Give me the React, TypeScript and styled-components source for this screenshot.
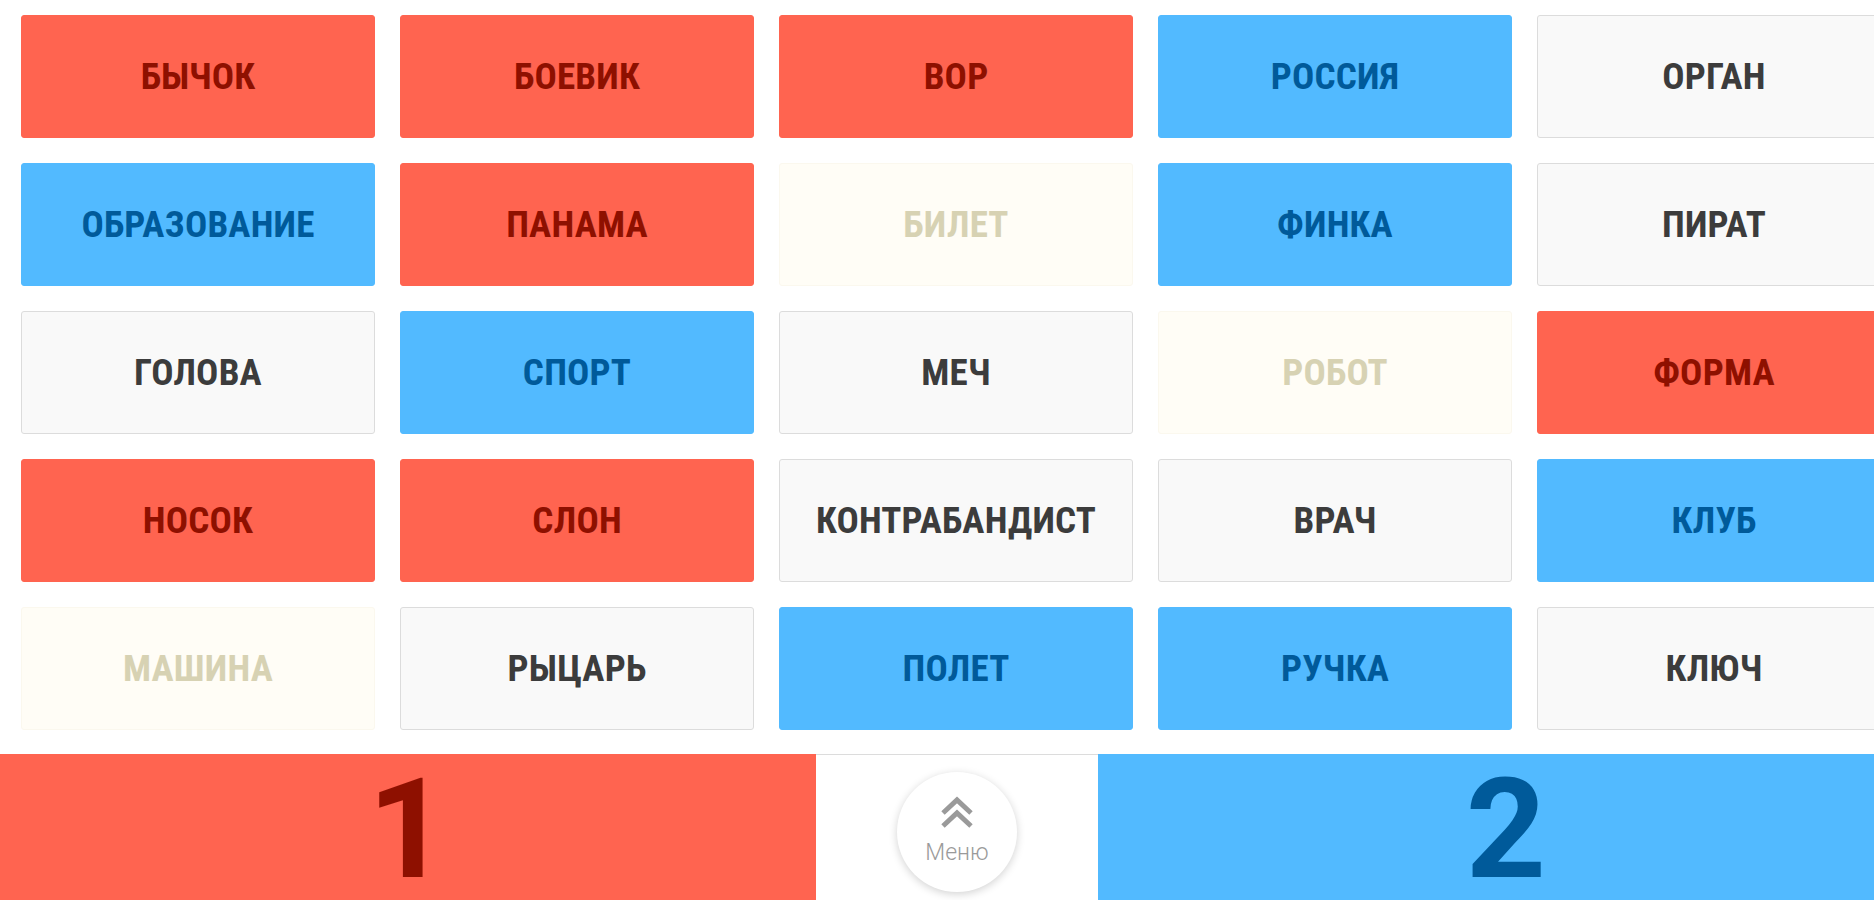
import React from "react";
import styled, { createGlobalStyle } from "styled-components";

type Team = "red" | "blue" | "neutral" | "killer";

const RED = "red";
const BLUE = "blue";
const NEUTRAL = "neutral";
const KILLER = "killer";

const words: [string, Team][] = [
  ["БЫЧОК", RED],
  ["БОЕВИК", RED],
  ["ВОР", RED],
  ["РОССИЯ", BLUE],
  ["ОРГАН", NEUTRAL],
  ["ОБРАЗОВАНИЕ", BLUE],
  ["ПАНАМА", RED],
  ["БИЛЕТ", KILLER],
  ["ФИНКА", BLUE],
  ["ПИРАТ", NEUTRAL],
  ["ГОЛОВА", NEUTRAL],
  ["СПОРТ", BLUE],
  ["МЕЧ", NEUTRAL],
  ["РОБОТ", KILLER],
  ["ФОРМА", RED],
  ["НОСОК", RED],
  ["СЛОН", RED],
  ["КОНТРАБАНДИСТ", NEUTRAL],
  ["ВРАЧ", NEUTRAL],
  ["КЛУБ", BLUE],
  ["МАШИНА", KILLER],
  ["РЫЦАРЬ", NEUTRAL],
  ["ПОЛЕТ", BLUE],
  ["РУЧКА", BLUE],
  ["КЛЮЧ", NEUTRAL],
];

const palette: Record<Team, { bg: string; fg: string; border: string }> = {
  red: { bg: "#ff6450", fg: "#8e1000", border: "#ff6450" },
  blue: { bg: "#52baff", fg: "#005a9a", border: "#52baff" },
  neutral: { bg: "#f9f9f9", fg: "#3c3c3c", border: "#dcdcdc" },
  killer: { bg: "#fffdf6", fg: "#d7d2b3", border: "#fbf8ee" },
};

function App() {
  return (
    <Page>
      <GlobalStyle />
      <Board>
        {words.map(([word, team]) => (
          <Card key={word} team={team}>
            {word}
          </Card>
        ))}
      </Board>
      <ScoreBar>
        <Score team={RED}>1</Score>
        <MenuCell>
          <MenuButton>
            <svg width="34" height="34" viewBox="0 0 34 34">
              <polyline
                points="3,17 17,4 31,17"
                fill="none"
                stroke="#9a9a9a"
                strokeWidth="5"
              />
              <polyline
                points="3,30 17,17 31,30"
                fill="none"
                stroke="#9a9a9a"
                strokeWidth="5"
              />
            </svg>
            <MenuLabel>Меню</MenuLabel>
          </MenuButton>
        </MenuCell>
        <Score team={BLUE}>2</Score>
      </ScoreBar>
    </Page>
  );
}

const GlobalStyle = createGlobalStyle`
  html, body {
    margin: 0;
    padding: 0;
    overflow: hidden;
    background: #ffffff;
  }
`;

const Page = styled.div`
  width: 1914px;
  height: 900px;
  display: flex;
  flex-direction: column;
  font-family: Roboto, "Liberation Sans", sans-serif;
`;

const Board = styled.div`
  display: grid;
  grid-template-columns: repeat(5, 354px);
  grid-auto-rows: 123px;
  gap: 25px;
  padding: 15px 21px 0 21px;
`;

const Card = styled.div<{ team: Team }>`
  display: flex;
  align-items: center;
  justify-content: center;
  box-sizing: border-box;
  border-radius: 3px;
  background: ${(p) => palette[p.team].bg};
  border: 1px solid ${(p) => palette[p.team].border};
  color: ${(p) => palette[p.team].fg};
  font-family: "Roboto Condensed", Roboto, sans-serif;
  font-stretch: condensed;
  font-weight: 700;
  font-size: 37px;
  letter-spacing: 0.2px;
`;

const ScoreBar = styled.div`
  margin-top: 24px;
  flex: 1;
  display: grid;
  grid-template-columns: 816px 282px 816px;
`;

const Score = styled.div<{ team: Team }>`
  display: flex;
  align-items: center;
  justify-content: center;
  background: ${(p) => palette[p.team].bg};
  color: ${(p) => palette[p.team].fg};
  font-family: Roboto, sans-serif;
  font-weight: 700;
  font-size: 140px;
  line-height: 1;
  padding-top: 4px;
`;

const MenuCell = styled.div`
  display: flex;
  justify-content: center;
  align-items: flex-start;
  padding-top: 17px;
  border-top: 1px solid #dcdcdc;
`;

const MenuButton = styled.div`
  width: 120px;
  height: 120px;
  border-radius: 50%;
  background: #ffffff;
  box-shadow: 0 2px 9px rgba(0, 0, 0, 0.18);
  display: flex;
  flex-direction: column;
  align-items: center;
  padding-top: 24px;
  box-sizing: border-box;
`;

const MenuLabel = styled.span`
  margin-top: 9px;
  font-family: Roboto, sans-serif;
  font-weight: 300;
  font-size: 23px;
  color: #9a9a9a;
`;

export default App;
